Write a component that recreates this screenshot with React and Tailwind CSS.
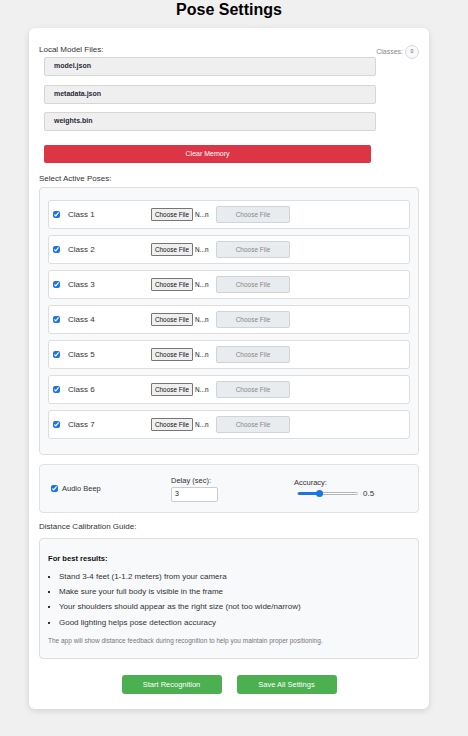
import React from 'react';

const font = { fontFamily: '"Liberation Sans", Arial, sans-serif' };

const classes = ['Class 1', 'Class 2', 'Class 3', 'Class 4', 'Class 5', 'Class 6', 'Class 7'];

const tips = [
  'Stand 3-4 feet (1-1.2 meters) from your camera',
  'Make sure your full body is visible in the frame',
  'Your shoulders should appear as the right size (not too wide/narrow)',
  'Good lighting helps pose detection accuracy',
];

const Check = () => (
  <input
    type="checkbox"
    defaultChecked
    className="w-[7px] h-[7px] m-0 shrink-0 accent-[#1a73e8]"
  />
);

const PoseRow = ({ name }) => (
  <div className="h-[29px] flex items-center bg-white border border-[#dedede] rounded-[3px] pl-[4px]">
    <Check />
    <span className="ml-[8px] w-[83px] text-[8px] text-[#333]">{name}</span>
    <span className="w-[42px] h-[13px] flex items-center justify-center border border-[#767676] bg-[#efefef] rounded-[1px] text-[6.4px] text-[#111]">
      Choose File
    </span>
    <span className="w-[23px] pl-[2px] text-[6.4px] text-[#111]">N...n</span>
    <span className="w-[74px] h-[17px] flex items-center justify-center bg-[#e9ecef] border border-[#cfd4da] rounded-[2px] text-[6.5px] text-[#888]">
      Choose File
    </span>
  </div>
);

const FileField = ({ label, className }) => (
  <div
    className={`ml-[5px] w-[332px] h-[19px] flex items-center pl-[9px] bg-[#efefef] border border-[#d6d6d6] rounded-[2px] text-[7px] font-bold text-[#2a2a3a] ${className || ''}`}
  >
    {label}
  </div>
);

export default function App() {
  return (
    <div style={font} className="min-h-screen w-[468px] bg-[#f0f0f0] pb-[27px]">
      <h1 className="ml-[29px] w-[400px] h-[21px] leading-[20px] text-center text-[16px] font-bold text-black">Pose Settings</h1>

      <div className="relative ml-[29px] mt-[7px] w-[400px] bg-white rounded-[6px] shadow-[0_2px_6px_rgba(0,0,0,0.12)] px-[10px] pt-[16px] pb-[15px]">
        {/* class counter badge */}
        <div className="absolute right-[10px] top-[17px] flex items-center">
          <span className="text-[7px] text-[#888]">Classes:</span>
          <span className="ml-[2px] w-[14px] h-[14px] rounded-full border border-[#d8d8e0] bg-[#f8f9fa] flex items-center justify-center text-[5px] text-[#555]">
            0
          </span>
        </div>

        <div className="h-[12px] leading-[12px] text-[8px] text-[#333]">Local Model Files:</div>
        <FileField label="model.json" className="mt-[1px]" />
        <FileField label="metadata.json" className="mt-[9px]" />
        <FileField label="weights.bin" className="mt-[8px]" />

        <button className="mt-[14px] ml-[5px] w-[327px] h-[18px] flex items-center justify-center bg-[#dc3545] rounded-[2px] text-[7px] text-white">
          Clear Memory
        </button>

        <div className="mt-[10px] h-[12px] leading-[12px] text-[8px] text-[#333]">Select Active Poses:</div>
        <div className="mt-[2px] bg-[#f8f9fa] border border-[#dedede] rounded-[4px] px-[8px] pt-[12px] pb-[15px] flex flex-col gap-[6px]">
          {classes.map(c => (
            <PoseRow key={c} name={c} />
          ))}
        </div>

        {/* audio / delay / accuracy */}
        <div className="mt-[9px] h-[49px] bg-[#f8f9fa] border border-[#e2e2e2] rounded-[4px] pl-[11px] flex items-center">
          <div className="w-[120px] flex items-center">
            <Check />
            <span className="ml-[4px] text-[7.5px] text-[#333]">Audio Beep</span>
          </div>
          <div className="w-[123px] flex flex-col">
            <span className="h-[10px] leading-[10px] text-[7.5px] text-[#333]">Delay (sec):</span>
            <div className="mt-[1px] w-[47px] h-[15px] bg-white border border-[#ccc] rounded-[2px] flex items-center pl-[3px] text-[7px] text-[#222]">
              3
            </div>
          </div>
          <div className="flex flex-col">
            <span className="h-[10px] leading-[10px] text-[7.5px] text-[#333]">Accuracy:</span>
            <div className="h-[12px] flex items-center">
              <div className="relative ml-[3px] w-[61px] h-[3px] rounded-full bg-white border border-[#b5b5b5]">
                <div className="absolute left-0 top-[-1px] w-[22px] h-[3px] rounded-full bg-[#1a73e8]" />
                <div className="absolute left-[18px] top-[-3px] w-[7px] h-[7px] rounded-full bg-[#1a73e8]" />
              </div>
              <span className="ml-[5px] text-[8px] text-[#333]">0.5</span>
            </div>
          </div>
        </div>

        <div className="mt-[8px] h-[12px] leading-[12px] text-[8px] text-[#333]">Distance Calibration Guide:</div>
        <div className="mt-[5px] bg-[#f8f9fa] border border-[#dedede] rounded-[4px] pl-[8px] pt-[14px] pb-[12px]">
          <div className="h-[12px] leading-[12px] text-[7.6px] font-bold text-[#111]">For best results:</div>
          <ul className="mt-[4px]">
            {tips.map(t => (
              <li key={t} className="h-[15.3px] flex items-center text-[8px] text-[#333]">
                <span className="w-[2px] h-[2px] bg-[#333] shrink-0" />
                <span className="ml-[9px]">{t}</span>
              </li>
            ))}
          </ul>
          <p className="mt-[6px] h-[10px] leading-[10px] text-[6.5px] text-[#777]">
            The app will show distance feedback during recognition to help you maintain proper positioning.
          </p>
        </div>

        <div className="mt-[16px] flex justify-center gap-[15px]">
          <button className="w-[100px] h-[19px] bg-[#4caf50] rounded-[3px] text-[7.5px] text-white flex items-center justify-center">
            Start Recognition
          </button>
          <button className="w-[100px] h-[19px] bg-[#4caf50] rounded-[3px] text-[7.5px] text-white flex items-center justify-center">
            Save All Settings
          </button>
        </div>
      </div>
    </div>
  );
}
